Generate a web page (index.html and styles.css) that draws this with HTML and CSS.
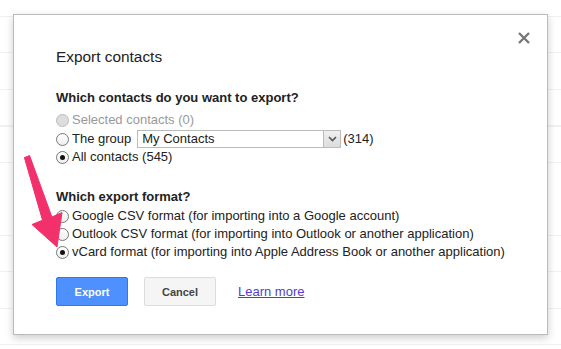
FILE: index.html
```html
<!DOCTYPE html>
<html lang="en">
<head>
  <meta charset="UTF-8">
  <title>Export contacts</title>
  <link rel="stylesheet" href="styles.css">
</head>
<body>
  <div class="dialog">
    <button class="close-btn" aria-label="Close">
      <svg width="12" height="12" viewBox="0 0 12 12">
        <path d="M1 1 L11 11 M11 1 L1 11" stroke="#777" stroke-width="2.4" fill="none"/>
      </svg>
    </button>

    <h1 class="dialog-title">Export contacts</h1>

    <h2 class="section-title">Which contacts do you want to export?</h2>
    <div class="option disabled"><span class="radio"></span>Selected contacts (0)</div>
    <div class="option">
      <span class="radio"></span>The group
      <div class="select">
        <span class="select-value">My Contacts</span>
        <span class="select-arrow">
          <svg width="9" height="6" viewBox="0 0 9 6">
            <path d="M1 1 L4.5 4.5 L8 1" stroke="#555" stroke-width="1.6" fill="none"/>
          </svg>
        </span>
      </div>
      <span class="count">(314)</span>
    </div>
    <div class="option"><span class="radio checked"></span>All contacts (545)</div>

    <h2 class="section-title second">Which export format?</h2>
    <div class="option"><span class="radio"></span>Google CSV format (for importing into a Google account)</div>
    <div class="option"><span class="radio"></span>Outlook CSV format (for importing into Outlook or another application)</div>
    <div class="option"><span class="radio checked"></span>vCard format (for importing into Apple Address Book or another application)</div>

    <div class="actions">
      <button class="btn btn-primary">Export</button>
      <button class="btn">Cancel</button>
      <a href="#" class="learn-more">Learn more</a>
    </div>
  </div>

  <svg class="pointer-arrow" width="80" height="260" viewBox="0 0 80 260">
    <polygon points="29.6,155.6 51.9,217 62,212.5 57,247 32,224.5 42.5,220.2 24.4,157.6" fill="#f2306c" stroke="#f2306c" stroke-width="1" stroke-linejoin="round"/>
  </svg>
</body>
</html>
```

FILE: styles.css
```css
body {
  margin: 0;
  padding: 14px 13px;
  font-family: 'Liberation Sans', Arial, sans-serif;
  font-size: 13px;
  color: #222;
  background: repeating-linear-gradient(to bottom, #fff 0, #fff 16px, #f1f1f1 16px, #f1f1f1 17px, #fff 17px, #fff 36.5px);
  height: 349px;
  box-sizing: border-box;
  overflow: hidden;
}

.dialog {
  position: relative;
  width: 535px;
  box-sizing: border-box;
  background: #fff;
  border: 1px solid #bbb;
  box-shadow: 0 3px 8px rgba(0, 0, 0, 0.2);
  padding: 32px 42px 28px;
}

.close-btn {
  position: absolute;
  top: 17px;
  right: 17px;
  background: none;
  border: none;
  padding: 0;
  width: 12px;
  height: 12px;
  cursor: pointer;
}

.close-btn svg {
  display: block;
}

.dialog-title {
  margin: 0 0 22px;
  font-size: 15.4px;
  font-weight: normal;
  line-height: 20px;
  color: #222;
}

.section-title {
  margin: 0 0 4px;
  font-size: 13px;
  font-weight: bold;
  line-height: 18px;
  color: #222;
}

.section-title.second {
  margin-top: 22px;
  margin-bottom: 1px;
}

.option {
  display: flex;
  align-items: center;
  height: 18px;
  line-height: 18px;
  white-space: nowrap;
}

.option.disabled {
  color: #999;
  margin-bottom: 1px;
}

.radio {
  width: 11px;
  height: 11px;
  border: 1px solid #777;
  border-radius: 50%;
  box-sizing: content-box;
  background: linear-gradient(#fff, #eee);
  margin: 0 3px 0 0;
  position: relative;
  flex: none;
}

.disabled .radio {
  border-color: #bbb;
  background: #ddd;
}

.radio.checked::after {
  content: '';
  position: absolute;
  top: 3px;
  left: 3px;
  width: 5px;
  height: 5px;
  border-radius: 50%;
  background: #111;
}

.select {
  display: flex;
  align-items: center;
  width: 204px;
  height: 18px;
  border: 1px solid #bbb;
  box-sizing: border-box;
  margin-left: 6px;
  background: #fff;
}

.select-value {
  flex: 1;
  padding-left: 4px;
  line-height: 16px;
}

.select-arrow {
  width: 16px;
  height: 16px;
  border-left: 1px solid #bbb;
  background: linear-gradient(#f0f0f0, #dcdcdc);
  display: flex;
  align-items: center;
  justify-content: center;
}

.count {
  margin-left: 2px;
}

.actions {
  display: flex;
  align-items: center;
  margin-top: 16px;
}

.btn {
  height: 29px;
  min-width: 72px;
  padding: 0 8px;
  border: 1px solid #dcdcdc;
  border-radius: 2px;
  background: #f5f5f5;
  color: #444;
  font-family: 'Liberation Sans', Arial, sans-serif;
  font-size: 11px;
  font-weight: bold;
  margin-right: 16px;
  cursor: pointer;
}

.btn-primary {
  background: #4d90fe;
  border-color: #3079ed;
  color: #fff;
}

.learn-more {
  margin-left: 6px;
  color: #4c3fcf;
  text-decoration: underline;
  font-size: 13px;
}

.pointer-arrow {
  position: absolute;
  top: 0;
  left: 0;
}
```
